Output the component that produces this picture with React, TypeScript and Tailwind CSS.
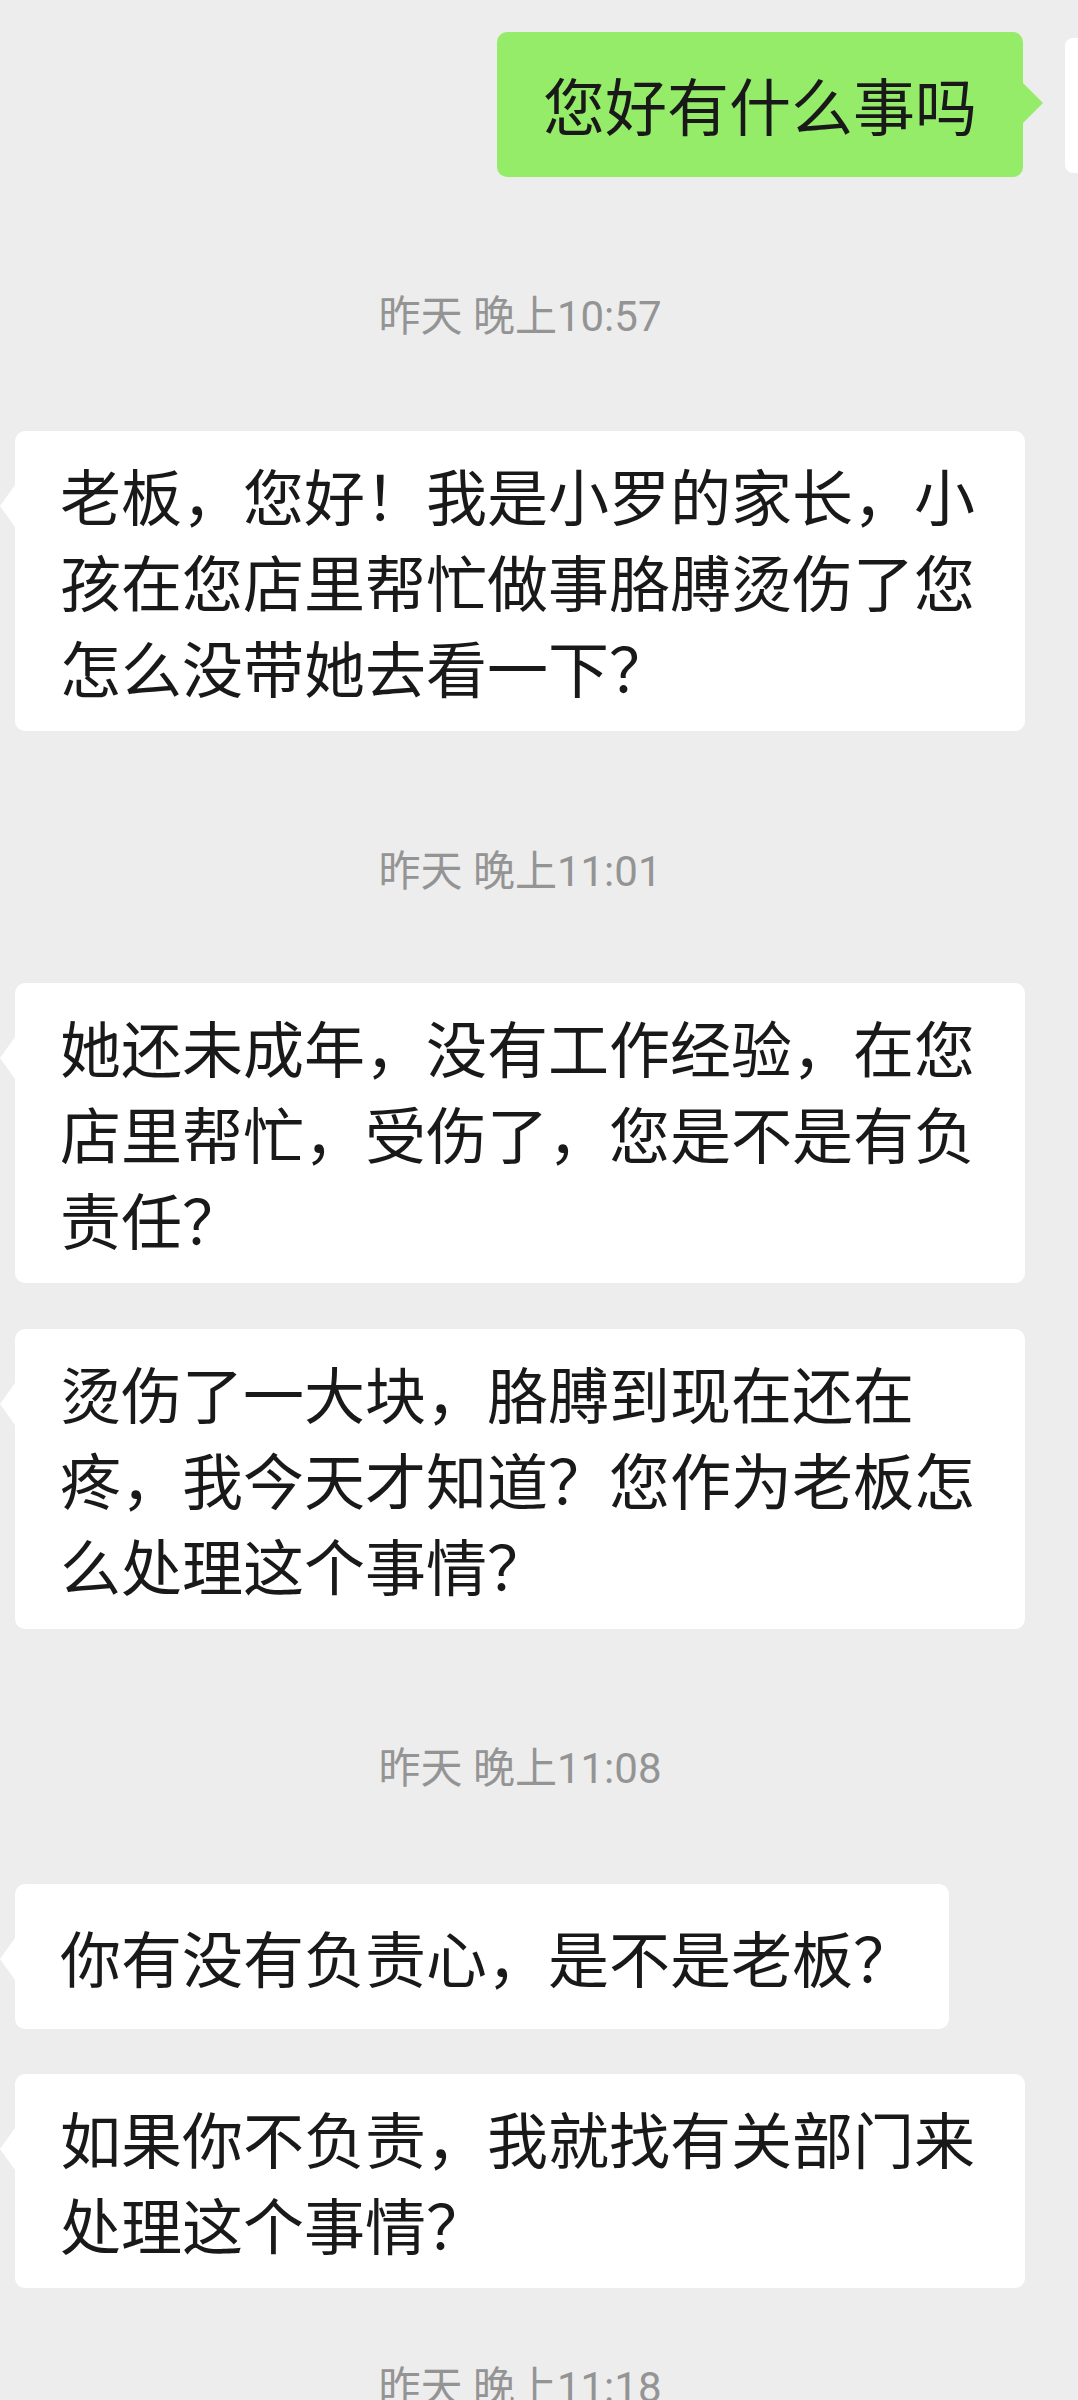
import React from "react";

const cjk = { fontFamily: '"Noto Sans CJK SC", "Noto Sans", sans-serif' };
const stamp = { fontFamily: 'Roboto, "Noto Sans CJK SC", sans-serif' };

function Stamp({ text, className }: { text: string; className: string }) {
  return (
    <div
      style={stamp}
      className={`h-[60px] pr-[38px] text-center text-[42px] leading-[60px] text-[#949494] ${className}`}
    >
      {text}
    </div>
  );
}

function Incoming({
  lines,
  full,
  className,
}: {
  lines: string[];
  full?: boolean;
  className: string;
}) {
  return (
    <div className={`relative ml-[15px] ${className}`}>
      <div className="absolute left-[-15px] top-[54px] h-0 w-0 border-y-[21px] border-r-[15px] border-y-transparent border-r-white" />
      <div
        style={cjk}
        className={`flex min-h-[145px] flex-col justify-center rounded-[10px] bg-white py-[21px] pl-[45px] text-[61px] leading-[86px] text-[#191919] ${
          full ? "w-[1010px] pr-[45px]" : "w-fit pr-[35px]"
        }`}
      >
        {lines.map((l, i) => (
          <div key={i} className="whitespace-nowrap">
            {l}
          </div>
        ))}
      </div>
    </div>
  );
}

export default function App() {
  return (
    <div className="h-[2400px] w-[1078px] overflow-hidden bg-[#ededed] pt-[32px]">
      <div className="flex w-[1200px] items-start justify-end gap-[42px]">
        <div className="relative">
          <div
            style={cjk}
            className="flex h-[145px] items-center whitespace-nowrap rounded-[10px] bg-[#95ec69] px-[46px] text-[62px] text-[#191919]"
          >
            您好有什么事吗
          </div>
          <div className="absolute right-[-20px] top-[51px] h-0 w-0 border-y-[20px] border-l-[20px] border-y-transparent border-l-[#95ec69]" />
        </div>
        <div className="mt-[6px] h-[135px] w-[135px] rounded-[8px] bg-white" />
      </div>

      <Stamp text="昨天 晚上10:57" className="mt-[110px]" />

      <Incoming
        className="mt-[84px]"
        full
        lines={[
          "老板，您好！我是小罗的家长，小",
          "孩在您店里帮忙做事胳膊烫伤了您",
          "怎么没带她去看一下？",
        ]}
      />

      <Stamp text="昨天 晚上11:01" className="mt-[111px]" />

      <Incoming
        className="mt-[81px]"
        full
        lines={[
          "她还未成年，没有工作经验，在您",
          "店里帮忙，受伤了，您是不是有负",
          "责任？",
        ]}
      />

      <Incoming
        className="mt-[46px]"
        full
        lines={[
          "烫伤了一大块，胳膊到现在还在",
          "疼，我今天才知道？您作为老板怎",
          "么处理这个事情？",
        ]}
      />

      <Stamp text="昨天 晚上11:08" className="mt-[110px]" />

      <Incoming className="mt-[85px]" lines={["你有没有负责心，是不是老板？"]} />

      <Incoming
        className="mt-[45px]"
        full
        lines={["如果你不负责，我就找有关部门来", "处理这个事情？"]}
      />

      <Stamp text="昨天 晚上11:18" className="mt-[70px]" />
    </div>
  );
}
